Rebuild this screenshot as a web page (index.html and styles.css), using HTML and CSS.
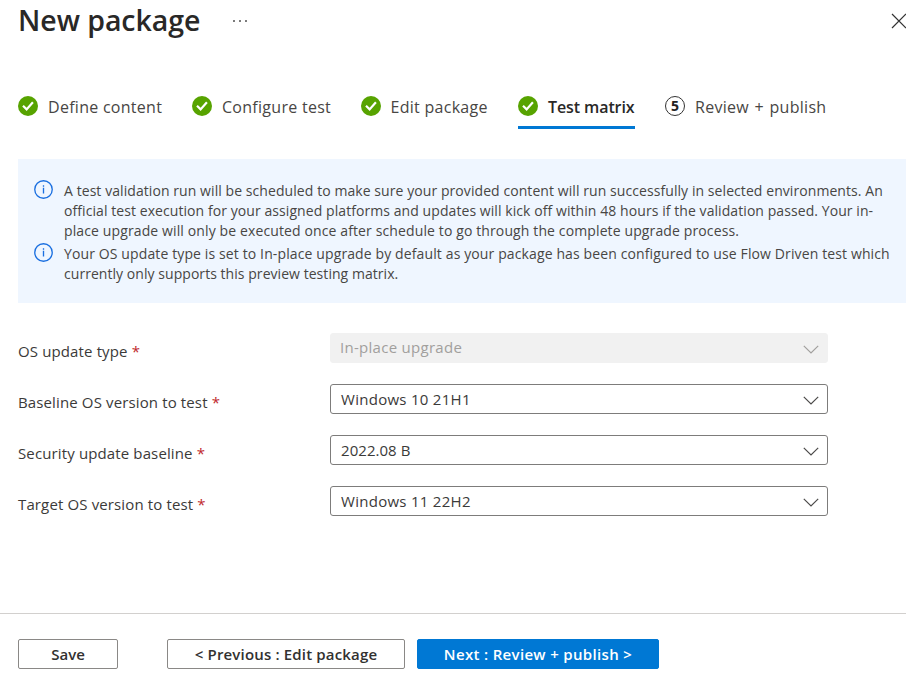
FILE: index.html
```html
<!DOCTYPE html>
<html lang="en">
<head>
<meta charset="utf-8">
<title>New package</title>
<link rel="stylesheet" href="styles.css">
</head>
<body>
<svg class="defs" width="0" height="0" aria-hidden="true">
  <symbol id="check" viewBox="0 0 20 20"><circle cx="10" cy="10" r="10" fill="#57a300"/><path d="M5 9.8l3.6 3.6 6.3-7.2" fill="none" stroke="#fff" stroke-width="2.2"/></symbol>
  <symbol id="info" viewBox="0 0 20 20"><circle cx="10" cy="10" r="9.2" fill="none" stroke="#1a6fe0" stroke-width="1.4"/><path d="M10 8.2v6M10 5.4v1.6" stroke="#1a6fe0" stroke-width="1.4"/></symbol>
  <symbol id="chevron" viewBox="0 0 16 9"><path d="M.8.8L8 8 15.2.8" fill="none" stroke="currentColor" stroke-width="1.2"/></symbol>
</svg>
<div class="blade">
  <header class="header">
    <h1 class="title">New package</h1>
    <svg class="more" width="16" height="4" viewBox="0 0 16 4"><g fill="#444"><circle cx="2" cy="2" r=".95"/><circle cx="8" cy="2" r=".95"/><circle cx="14" cy="2" r=".95"/></g></svg>
    <svg class="close" width="16" height="16" viewBox="0 0 16 16"><path d="M1 1l14 14M15 1L1 15" stroke="#333" stroke-width="1.2"/></svg>
  </header>
  <nav class="steps">
    <a class="step define"><svg class="badge"><use href="#check"/></svg><span>Define content</span></a>
    <a class="step configure"><svg class="badge"><use href="#check"/></svg><span>Configure test</span></a>
    <a class="step edit"><svg class="badge"><use href="#check"/></svg><span>Edit package</span></a>
    <a class="step matrix active"><svg class="badge"><use href="#check"/></svg><span>Test matrix</span></a>
    <a class="step review"><b class="badge number">5</b><span>Review + publish</span></a>
  </nav>
  <section class="banner">
    <div class="note"><svg class="info"><use href="#info"/></svg><p>A test validation run will be scheduled to make sure your provided content will run successfully in selected environments. An<br>official test execution for your assigned platforms and updates will kick off within 48 hours if the validation passed. Your in-<br><span class="loose">place upgrade will only be executed once after schedule to go through the complete upgrade process.</span></p></div>
    <div class="note"><svg class="info"><use href="#info"/></svg><p><span class="loose">Your OS update type is set to In-place upgrade by default as your package has been configured to use Flow Driven test which</span><br><span class="tight">currently only supports this preview testing matrix.</span></p></div>
  </section>
  <form class="form">
    <div class="row"><label>OS update type <i>*</i></label><div class="select disabled"><span>In-place upgrade</span><svg class="chevron"><use href="#chevron"/></svg></div></div>
    <div class="row"><label>Baseline OS version to test <i>*</i></label><div class="select"><span>Windows 10 21H1</span><svg class="chevron"><use href="#chevron"/></svg></div></div>
    <div class="row"><label>Security update baseline <i>*</i></label><div class="select"><span class="release">2022.08 B</span><svg class="chevron"><use href="#chevron"/></svg></div></div>
    <div class="row"><label>Target OS version to test <i>*</i></label><div class="select"><span>Windows 11 22H2</span><svg class="chevron"><use href="#chevron"/></svg></div></div>
  </form>
  <footer class="footer">
    <button class="btn save">Save</button>
    <button class="btn previous">&lt; Previous : Edit package</button>
    <button class="btn primary">Next : Review + publish &gt;</button>
  </footer>
</div>
</body>
</html>
```

FILE: styles.css
```css
* { box-sizing: border-box; }
body { margin: 0; background: #fff; color: #3b3a39; font-family: "Open Sans", "Noto Sans", sans-serif; font-size: 15.5px; overflow: hidden; }
.defs { display: block; height: 0; }
.blade { display: flex; flex-direction: column; height: 681px; }
.header { display: flex; align-items: center; height: 42px; padding-left: 18px; flex: none; }
.title { margin: 0; width: 214px; font-size: 28.5px; font-weight: 600; line-height: 40px; height: 42px; letter-spacing: -0.05px; color: #292827; white-space: nowrap; }
.close { margin-left: auto; margin-right: -1px; }
.steps { display: flex; margin: 44px 0 0 18px; height: 43px; flex: none; }
.step { display: flex; gap: 10px; height: 43px; padding-top: 10px; line-height: 22px; font-size: 16px; letter-spacing: .28px; white-space: nowrap; color: #484644; }
.badge { width: 20px; height: 20px; flex: none; }
.define { width: 174px; }
.configure { width: 168.5px; }
.edit { width: 157.5px; }
.matrix { width: 117px; margin-right: 30px; }
.active { border-bottom: 3px solid #0078d4; font-weight: 600; letter-spacing: -.1px; color: #292827; }
.review { letter-spacing: .3px; word-spacing: 1px; }
.number { border: 1.5px solid #333; border-radius: 50%; font-size: 14px; line-height: 18px; letter-spacing: 0; text-align: center; color: #222; }
.banner { margin: 30px 0 0 18px; height: 144px; padding: 22px 0 0 16px; background: #eff6ff; flex: none; }
.note { display: flex; gap: 11px; margin-bottom: 3px; }
.info { width: 19px; height: 19px; flex: none; margin-top: -1px; }
.note p { margin: 0; font-size: 14px; line-height: 20px; letter-spacing: .072px; white-space: nowrap; color: #484644; }
.loose { letter-spacing: .12px; }
.tight { letter-spacing: .05px; }
.form { display: flex; flex-direction: column; gap: 21px; margin: 30px 0 0 18px; }
.row { display: flex; height: 30px; }
.row label { width: 312px; padding-top: 7px; line-height: 22px; font-size: 15px; letter-spacing: .13px; white-space: nowrap; }
.row i { font-style: normal; color: #c0272d; }
.select { display: flex; align-items: center; justify-content: space-between; width: 498px; height: 30px; padding: 0 8px 0 10px; border: 1px solid #7d7c7b; border-radius: 3px; font-size: 15px; line-height: 28px; letter-spacing: .28px; }
.release { letter-spacing: .05px; }
.disabled { background: #f1f1f1; border-color: #f1f1f1; color: #a19f9d; }
.disabled span { margin: -2px 0 0 -1px; }
.chevron { width: 16px; height: 9px; margin-top: 2px; color: #4b4a49; }
.disabled .chevron { color: #a19f9d; }
.footer { display: flex; margin-top: auto; height: 68px; padding: 25px 0 0 18px; border-top: 1px solid #d2d0ce; flex: none; }
.btn { height: 30px; padding: 0; border: 1px solid #8a8886; border-radius: 2px; background: #fff; color: #323130; font: 600 15px/28px "Open Sans", "Noto Sans", sans-serif; white-space: nowrap; }
.save { width: 100px; margin-right: 49px; }
.previous { width: 238px; margin-right: 12px; letter-spacing: .17px; }
.primary { width: 242px; background: #0078d4; border-color: #0078d4; color: #fff; letter-spacing: .33px; }
```
